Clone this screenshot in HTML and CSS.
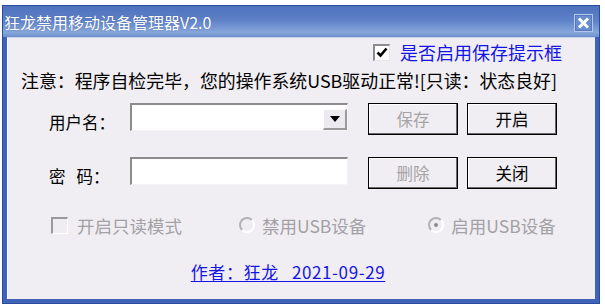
FILE: index.html
```html
<!DOCTYPE html>
<html lang="zh-CN">
<head>
<meta charset="utf-8">
<title>狂龙禁用移动设备管理器V2.0</title>
<link rel="stylesheet" href="styles.css">
</head>
<body>
<div class="window">
  <div class="titlebar">
    <span class="title">狂龙禁用移动设备管理器V2.0</span>
    <span class="close"><svg width="13" height="12" viewBox="0 0 13 12"><path d="M2 1.5 L11 10.5 M11 1.5 L2 10.5" stroke="#fff" stroke-width="3" fill="none"/></svg></span>
  </div>
  <div class="client">
    <div class="toprow">
      <span class="cbox"><svg width="12" height="11" viewBox="0 0 12 11"><path d="M1.5 5.5 L4.5 8.5 L10.5 1.5" stroke="#000" stroke-width="2.6" fill="none"/></svg></span>
      <span class="bluetext">是否启用保存提示框</span>
    </div>
    <div class="notice">注意：程序自检完毕，您的操作系统USB驱动正常![只读：状态良好]</div>
    <div class="frow">
      <span class="label">用户名：</span>
      <div class="field">
        <span class="drop"><svg width="10" height="6" viewBox="0 0 10 6"><path d="M0 0 H10 L5 6 Z" fill="#000"/></svg></span>
      </div>
      <span class="btn disabled">保存</span>
      <span class="btn">开启</span>
    </div>
    <div class="frow second">
      <span class="label">密&nbsp;&nbsp;&nbsp;码：</span>
      <div class="field"></div>
      <span class="btn disabled">删除</span>
      <span class="btn">关闭</span>
    </div>
    <div class="options">
      <span class="opt opt1"><span class="dbox"></span>开启只读模式</span>
      <span class="opt opt2"><span class="radio"></span>禁用USB设备</span>
      <span class="opt opt3"><span class="radio on"></span>启用USB设备</span>
    </div>
    <div class="footer"><a class="author" href="#">作者：狂龙&nbsp;&nbsp;&nbsp;2021-09-29</a></div>
  </div>
</div>
</body>
</html>
```
FILE: styles.css
```css
* { box-sizing: border-box; }
html, body { margin: 0; padding: 0; background: #ffffff; }
body {
  font-family: "Noto Sans CJK SC", "Noto Sans", sans-serif;
  width: 605px;
  height: 308px;
  overflow: hidden;
}
.window {
  margin: 5px 0 0 2px;
  width: 598px;
  height: 299px;
  background: #3f63b8;
  border: 1px solid #2a4a9c;
  padding: 0 4px 4px 4px;
  display: flex;
  flex-direction: column;
}
.titlebar {
  height: 31px;
  display: flex;
  align-items: center;
  justify-content: space-between;
  margin: 0 -4px;
  padding-left: 1px;
  padding-right: 6px;
  background: linear-gradient(to bottom, #4e72bd 0%, #5d80c7 45%, #86a6da 85%, #6f90cf 100%);
}
.title {
  color: #ffffff;
  font-size: 16px;
  text-shadow: 0 0 1px rgba(40,60,120,0.6);
}
.close {
  width: 19px;
  height: 18px;
  background: #6a8dcf;
  border: 1px solid #b4c8ec;
  box-shadow: inset 0 0 0 1px #5577bd;
  display: flex;
  align-items: center;
  justify-content: center;
  margin-top: 2px;
}
.client {
  flex: 1;
  background: #f0eef2;
  border-top: 1px solid #c6d3ec;
  box-shadow: inset 1px 0 0 #ffffff;
  display: flex;
  flex-direction: column;
  font-size: 18px;
  color: #000;
}
.toprow {
  margin-top: 4px;
  height: 20px;
  display: flex;
  align-items: center;
  padding-left: 366px;
}
.cbox {
  width: 17px;
  height: 17px;
  background: #ffffff;
  border-top: 2px solid #8a8a8a;
  border-left: 2px solid #8a8a8a;
  border-right: 1px solid #e8e8e8;
  border-bottom: 1px solid #e8e8e8;
  display: flex;
  align-items: center;
  justify-content: center;
  margin-right: 10px;
}
.bluetext {
  color: #1414e6;
  font-size: 18px;
  line-height: 20px;
}
.notice {
  margin-top: 7px;
  padding-left: 14px;
  height: 22px;
  line-height: 22px;
  font-size: 17.9px;
  white-space: nowrap;
}
.frow {
  margin-top: 12px;
  display: flex;
  align-items: flex-start;
  padding-left: 42px;
  height: 32px;
}
.frow.second { margin-top: 22px; }
.label {
  width: 81px;
  font-size: 16.5px;
  line-height: 20px;
  padding-top: 9px;
  white-space: nowrap;
}
.field {
  width: 218px;
  height: 28px;
  background: #ffffff;
  border-top: 2px solid #8c8c8c;
  border-left: 2px solid #8c8c8c;
  border-right: 1px solid #f4f4f4;
  border-bottom: 1px solid #f4f4f4;
  display: flex;
  justify-content: flex-end;
  align-items: stretch;
  padding: 4px 0 0 0;
  margin-right: 20px;
}
.frow.second .field { padding: 0; }
.drop {
  width: 24px;
  background: #eceaee;
  border-right: 2px solid #9a9a9a;
  border-bottom: 2px solid #9a9a9a;
  border-top: 1px solid #ffffff;
  border-left: 1px solid #ffffff;
  display: flex;
  align-items: center;
  justify-content: center;
}
.btn {
  width: 90px;
  height: 32px;
  border: 1px solid #000;
  box-shadow: inset -1px -1px 0 #6a6a6a, inset 1px 1px 0 #ffffff;
  background: #f0eef2;
  display: flex;
  align-items: center;
  justify-content: center;
  font-size: 16.5px;
  margin-right: 9px;
}
.btn.disabled { color: #a6a4a8; }
.options {
  margin-top: 25px;
  height: 22px;
  display: flex;
  align-items: center;
  color: #a3a1a5;
  font-size: 17.5px;
}
.opt { display: flex; align-items: center; white-space: nowrap; }
.opt1 { margin-left: 44px; }
.opt2 { margin-left: 57px; }
.opt3 { margin-left: 62px; }
.dbox {
  width: 17px;
  height: 17px;
  border-top: 2px solid #9a9a9a;
  border-left: 2px solid #9a9a9a;
  border-right: 1px solid #ffffff;
  border-bottom: 1px solid #ffffff;
  background: #efedf1;
  margin-right: 9px;
}
.radio {
  width: 16px;
  height: 16px;
  border-radius: 50%;
  border: 2px solid #b4b2b6;
  border-right-color: #ffffff;
  border-bottom-color: #ffffff;
  background: #efedf1;
  margin-right: 7px;
  position: relative;
}
.radio.on::after {
  content: "";
  position: absolute;
  left: 4px; top: 4px;
  width: 4px; height: 4px;
  border-radius: 50%;
  background: #8a888c;
}
.footer {
  margin-top: 22px;
  text-align: center;
  padding-right: 26px;
}
.author {
  color: #1414e6;
  font-size: 17px;
  letter-spacing: 0.6px;
  text-decoration: underline;
  text-underline-offset: 2px;
}
```
